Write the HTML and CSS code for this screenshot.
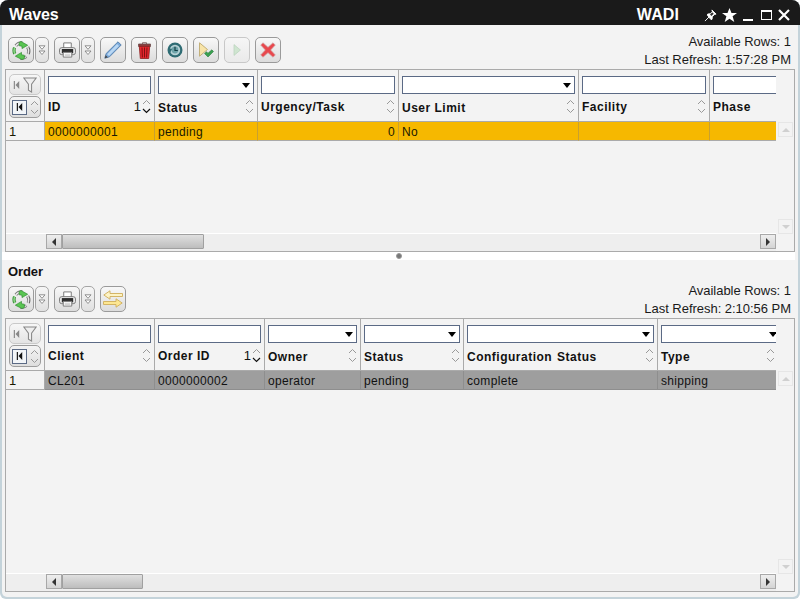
FILE: index.html
```html
<!DOCTYPE html>
<html lang="en">
<head>
<meta charset="utf-8">
<title>Waves</title>
<link rel="stylesheet" href="styles.css">
</head>
<body>
<svg class="defs" width="0" height="0" aria-hidden="true">
  <defs>
    <symbol id="i-refresh" viewBox="0 0 20 20">
      <g fill="none" stroke-linecap="butt">
        <path d="M16.500 6.500a8 8 0 0 1 .6 7" stroke="#666" stroke-width="3.400"/>
        <path d="M16.500 6.500a8 8 0 0 1 .6 7" stroke="#e6e6e6" stroke-width="1.600"/>
        <path d="M3 13.500a8 8 0 0 1-.3-6.500" stroke="#3d8f3d" stroke-width="3.400"/>
        <path d="M3 13.500a8 8 0 0 1-.3-6.500" stroke="#8ad884" stroke-width="1.600"/>
        <path d="M4 5a8 8 0 0 1 7-3" stroke="#777" stroke-width="3.200"/>
        <path d="M4 5a8 8 0 0 1 7-3" stroke="#ececec" stroke-width="1.500"/>
        <path d="M15 16.500a8 8 0 0 1-6 1.800" stroke="#666" stroke-width="3.200"/>
        <path d="M15 16.500a8 8 0 0 1-6 1.800" stroke="#e0e0e0" stroke-width="1.500"/>
      </g>
      <path d="M9.500 .5l7 4-6 3.500V5.500l-3-.5V1.500z" fill="#59c552" stroke="#2f8a2f" stroke-width=".7"/>
      <path d="M10.500 19.500l-7-3.500 6.500-4v2.500l3 .5v3.500z" fill="#59c552" stroke="#2f8a2f" stroke-width=".7"/>
    </symbol>
    <symbol id="i-more" viewBox="0 0 8 11">
      <path d="M1 .8h6L4 4.300z M1 6h6l-3 3.500z" fill="#fff" stroke="#777" stroke-width=".8"/>
    </symbol>
    <symbol id="i-print" viewBox="0 0 18 16">
      <path d="M5 .5h8v6H5z" fill="#fff" stroke="#777"/>
      <rect x=".5" y="5.500" width="17" height="7.500" rx="2.500" fill="#e8e8e8" stroke="#777"/>
      <path d="M3 7h12v4.500H3z" fill="#2c2c2c"/>
      <path d="M4.500 10.500h9v5h-9z" fill="#fff" stroke="#777"/>
      <path d="M6 12.500h6M6 14h6" stroke="#bbb" stroke-width=".8"/>
    </symbol>
    <symbol id="i-pencil" viewBox="0 0 18 18">
      <path d="M14 .8l3.200 3.200L5.500 15.800 .8 17.200 2.200 12.500z" fill="#7cabdc" stroke="#517ca8" stroke-width=".9"/>
      <path d="M13 3l2 2L5 15l-1.800-1.800z" fill="#b9d7f3"/>
      <path d="M.8 17.200l.9-3 2.100 2.100z" fill="#444"/>
    </symbol>
    <symbol id="i-trash" viewBox="0 0 13 17">
      <path d="M4.500 2V.7h4V2" fill="none" stroke="#8a7070" stroke-width="1"/>
      <path d="M.5 2h12v2.500H.5z" fill="#8c3a3a" stroke="#6a5050" stroke-width=".8"/>
      <path d="M1.300 4.500h10.400l-1 12H2.300z" fill="#e8262e" stroke="#8a2020" stroke-width=".8"/>
      <path d="M4 5.500l.4 10M6.500 5.500v10M9 5.500l-.4 10" stroke="#7d1212" stroke-width="1"/>
    </symbol>
    <symbol id="i-history" viewBox="0 0 16 16">
      <circle cx="8" cy="8" r="7.500" fill="#2f6c74"/>
      <circle cx="8" cy="8" r="5.200" fill="#b7d2d6"/>
      <circle cx="8" cy="8" r="3.400" fill="#6ea3a9"/>
      <path d="M8 4.800V8.500h2.800" fill="none" stroke="#123f46" stroke-width="1.200"/>
      <path d="M.8 6.500l4.400.2L3 11z" fill="#2f6c74"/>
    </symbol>
    <symbol id="i-run" viewBox="0 0 16 16">
      <path d="M1.500 .8L9.500 7.500 1.500 14.200z" fill="#f8e4a8" stroke="#bda96f" stroke-width=".9"/>
      <path d="M6.500 11.500l2-1.800 1.500 1.500 3.800-3.400 1.700 1.700L10 15z" fill="#3aa050" stroke="#1f7030" stroke-width=".5"/>
    </symbol>
    <symbol id="i-play" viewBox="0 0 8 12">
      <path d="M1 .6L7.400 6 1 11.400z" fill="#cfe5d0" stroke="#bcd4bf" stroke-width=".8"/>
    </symbol>
    <symbol id="i-cancel" viewBox="0 0 16 16">
      <path d="M3 .8L8 5.300 13 .8l2.300 2.300L10.700 8l4.600 4.900-2.300 2.300L8 10.700 3 15.200.7 12.900 5.300 8 .7 3.100z" fill="#e8494e" stroke="#cfa9a9" stroke-width=".7"/>
    </symbol>
    <symbol id="i-swap" viewBox="0 0 20 18">
      <path d="M.8 5L7 .8v2.700h12.500v3H7v2.700z" fill="#fdf3c4" stroke="#cfae5a" stroke-width=".9"/>
      <path d="M19.200 13L13 8.800v2.700H.5v3H13v2.700z" fill="#fde792" stroke="#cfae5a" stroke-width=".9"/>
    </symbol>
    <symbol id="i-first" viewBox="0 0 9 10">
      <path d="M1 0h1.500v10H1zM8 0v10L3.200 5z"/>
    </symbol>
    <symbol id="i-funnel" viewBox="0 0 16 18">
      <path d="M1 1h14L9.800 8v9l-3.600-2V8z" fill="#eee" stroke="#888" stroke-width="1.200"/>
    </symbol>
    <symbol id="i-pin" viewBox="0 0 14 14">
      <path d="M8.500 1l4.500 4.500-1.600.4-2.500 2.500-.2 2.600-1.200.4L3.600 6.600l.4-1.200 2.600-.2 2.400-2.500zM5.500 8.500L1 13" fill="#fff" stroke="#fff"/>
      <path d="M8.800 3.500L10.500 5.200 8 7.500 6.500 6z" fill="#333"/>
    </symbol>
    <symbol id="i-star" viewBox="0 0 15 14">
      <path d="M7.500 0l2 5h5.500l-4.400 3.300L12.300 14 7.500 10.700 2.700 14l1.700-5.700L0 5h5.500z" fill="#fff"/>
    </symbol>
    <symbol id="i-sort" viewBox="0 0 9 17">
      <path d="M1 6l3.500-3.500L8 6" fill="none" stroke="#999" stroke-width="1"/>
      <path d="M1 11l3.500 3.500L8 11" fill="none" stroke="#999" stroke-width="1"/>
    </symbol>
    <symbol id="i-sort-down" viewBox="0 0 9 17">
      <path d="M1 6l3.500-3.500L8 6" fill="none" stroke="#999" stroke-width="1"/>
      <path d="M1 11l3.500 3.500L8 11" fill="none" stroke="#111" stroke-width="1.200"/>
    </symbol>
  </defs>
</svg>

<div class="window">
  <header class="titlebar">
    <span class="title">Waves</span>
    <span class="brand">WADI</span>
    <div class="win-actions">
      <svg class="win-pin"><use href="#i-pin"/></svg>
      <svg class="win-star"><use href="#i-star"/></svg>
      <span class="win-min"></span>
      <span class="win-max"></span>
      <span class="win-close">
        <svg viewBox="0 0 12 12"><path d="M1 1l10 10M11 1L1 11" stroke="#fff" stroke-width="2.200"/></svg>
      </span>
    </div>
  </header>

  <main class="content">
    <section class="panel panel-waves">
      <div class="panel-head">
        <div class="toolbar">
          <div class="split">
            <button class="tb"><svg class="ic-refresh"><use href="#i-refresh"/></svg></button>
            <button class="tb-more"><svg class="ic-more"><use href="#i-more"/></svg></button>
          </div>
          <div class="split">
            <button class="tb"><svg class="ic-print"><use href="#i-print"/></svg></button>
            <button class="tb-more"><svg class="ic-more"><use href="#i-more"/></svg></button>
          </div>
          <button class="tb"><svg class="ic-pencil"><use href="#i-pencil"/></svg></button>
          <button class="tb"><svg class="ic-trash"><use href="#i-trash"/></svg></button>
          <button class="tb"><svg class="ic-16"><use href="#i-history"/></svg></button>
          <button class="tb"><svg class="ic-16"><use href="#i-run"/></svg></button>
          <button class="tb tb-off"><svg class="ic-play"><use href="#i-play"/></svg></button>
          <button class="tb"><svg class="ic-16"><use href="#i-cancel"/></svg></button>
        </div>
        <div class="stats">
          <div>Available Rows: 1</div>
          <div>Last Refresh: 1:57:28 PM</div>
        </div>
      </div>

      <div class="grid-box">
        <div class="grid-main">
          <div class="table cols-waves">
            <div class="hcell corner">
              <button class="corner-top">
                <svg class="ic-first-off"><use href="#i-first"/></svg>
                <svg class="ic-funnel"><use href="#i-funnel"/></svg>
              </button>
              <div class="corner-bottom">
                <span class="first-box"><svg class="ic-first"><use href="#i-first"/></svg></span>
                <svg class="sort"><use href="#i-sort"/></svg>
              </div>
            </div>
            <div class="hcell"><span class="filter"></span><div class="hrow"><span>ID</span><span class="sort-wrap"><span class="sort-n">1</span><svg class="sort"><use href="#i-sort-down"/></svg></span></div></div>
            <div class="hcell is-select"><span class="filter"><i class="caret"></i></span><div class="hrow"><span>Status</span><svg class="sort"><use href="#i-sort"/></svg></div></div>
            <div class="hcell"><span class="filter"></span><div class="hrow"><span>Urgency/Task</span><svg class="sort"><use href="#i-sort"/></svg></div></div>
            <div class="hcell is-select"><span class="filter"><i class="caret"></i></span><div class="hrow"><span>User Limit</span><svg class="sort"><use href="#i-sort"/></svg></div></div>
            <div class="hcell"><span class="filter"></span><div class="hrow"><span>Facility</span><svg class="sort"><use href="#i-sort"/></svg></div></div>
            <div class="hcell hcell-cut"><span class="filter"></span><div class="hrow"><span>Phase</span><svg class="sort"><use href="#i-sort"/></svg></div></div>

            <div class="cell row-num">1</div>
            <div class="cell row-on">0000000001</div>
            <div class="cell row-on">pending</div>
            <div class="cell row-on num">0</div>
            <div class="cell row-on">No</div>
            <div class="cell row-on"></div>
            <div class="cell row-on"></div>
          </div>
          <div class="hscroll">
            <button class="sb-btn"><i class="tri-left"></i></button>
            <span class="thumb thumb-waves"></span>
            <span class="sb-fill"></span>
            <button class="sb-btn"><i class="tri-right"></i></button>
          </div>
        </div>
        <div class="vscroll">
          <button class="vs-btn"><i class="tri-up"></i></button>
          <button class="vs-btn"><i class="tri-down"></i></button>
        </div>
      </div>
    </section>

    <div class="splitter"><span class="dot"></span></div>

    <section class="panel panel-order">
      <h2 class="panel-title">Order</h2>
      <div class="panel-head">
        <div class="toolbar">
          <div class="split">
            <button class="tb"><svg class="ic-refresh"><use href="#i-refresh"/></svg></button>
            <button class="tb-more"><svg class="ic-more"><use href="#i-more"/></svg></button>
          </div>
          <div class="split">
            <button class="tb"><svg class="ic-print"><use href="#i-print"/></svg></button>
            <button class="tb-more"><svg class="ic-more"><use href="#i-more"/></svg></button>
          </div>
          <button class="tb"><svg class="ic-swap"><use href="#i-swap"/></svg></button>
        </div>
        <div class="stats">
          <div>Available Rows: 1</div>
          <div>Last Refresh: 2:10:56 PM</div>
        </div>
      </div>

      <div class="grid-box grid-box-grow">
        <div class="grid-main">
          <div class="table cols-order">
            <div class="hcell corner">
              <button class="corner-top">
                <svg class="ic-first-off"><use href="#i-first"/></svg>
                <svg class="ic-funnel"><use href="#i-funnel"/></svg>
              </button>
              <div class="corner-bottom">
                <span class="first-box"><svg class="ic-first"><use href="#i-first"/></svg></span>
                <svg class="sort"><use href="#i-sort"/></svg>
              </div>
            </div>
            <div class="hcell"><span class="filter"></span><div class="hrow"><span>Client</span><svg class="sort"><use href="#i-sort"/></svg></div></div>
            <div class="hcell"><span class="filter"></span><div class="hrow"><span>Order ID</span><span class="sort-wrap"><span class="sort-n">1</span><svg class="sort"><use href="#i-sort-down"/></svg></span></div></div>
            <div class="hcell is-select"><span class="filter"><i class="caret"></i></span><div class="hrow"><span>Owner</span><svg class="sort"><use href="#i-sort"/></svg></div></div>
            <div class="hcell is-select"><span class="filter"><i class="caret"></i></span><div class="hrow"><span>Status</span><svg class="sort"><use href="#i-sort"/></svg></div></div>
            <div class="hcell is-select"><span class="filter"><i class="caret"></i></span><div class="hrow"><span class="wide-word">Configuration Status</span><svg class="sort"><use href="#i-sort"/></svg></div></div>
            <div class="hcell hcell-cut is-select"><span class="filter"><i class="caret"></i></span><div class="hrow"><span>Type</span><svg class="sort"><use href="#i-sort"/></svg></div></div>

            <div class="cell row-num">1</div>
            <div class="cell row-sel">CL201</div>
            <div class="cell row-sel">0000000002</div>
            <div class="cell row-sel">operator</div>
            <div class="cell row-sel">pending</div>
            <div class="cell row-sel">complete</div>
            <div class="cell row-sel">shipping</div>
          </div>
          <div class="hscroll">
            <button class="sb-btn"><i class="tri-left"></i></button>
            <span class="thumb thumb-order"></span>
            <span class="sb-fill"></span>
            <button class="sb-btn"><i class="tri-right"></i></button>
          </div>
        </div>
        <div class="vscroll">
          <button class="vs-btn"><i class="tri-up"></i></button>
          <button class="vs-btn"><i class="tri-down"></i></button>
        </div>
      </div>
    </section>
  </main>
</div>
</body>
</html>
```

FILE: styles.css
```css
* { box-sizing: border-box; }
html, body { margin: 0; padding: 0; height: 100%; background: #fff; }
body { font-family: "Liberation Sans", Arial, sans-serif; font-size: 12px; color: #111; overflow: hidden; }
.defs { position: absolute; }
button { font: inherit; padding: 0; margin: 0; }
svg { display: block; }

.window { width: 800px; height: 599px; display: flex; flex-direction: column; background: #c4d3da; border-radius: 8px 8px 6px 6px; overflow: hidden; }

.titlebar { height: 25px; flex: none; background: #1a1a1a; color: #fff; display: flex; align-items: center; padding: 5px 0 0 9px; font-weight: 700; font-size: 16px; }
.title { flex: 1; letter-spacing: -.1px; }
.brand { margin-right: 25px; letter-spacing: .1px; }
.win-actions { display: flex; align-items: center; margin-right: 10px; }
.win-pin { width: 13px; height: 13px; margin-right: 5px; }
.win-star { width: 15px; height: 14px; margin-right: 6px; }
.win-min { width: 10px; height: 2px; background: #fff; margin: 9px 8px 0 0; }
.win-max { width: 11px; height: 10px; border: 1px solid #fff; border-top-width: 2px; margin-right: 6px; }
.win-close { width: 12px; height: 12px; }
.win-close svg { width: 12px; height: 12px; }

.content { flex: 1; min-height: 0; margin: 0 2px 2px 2px; background: #f3f3f3; border-radius: 0 0 5px 5px; display: flex; flex-direction: column; }

.panel { display: flex; flex-direction: column; padding: 0 3px; }
.panel-waves { flex: none; padding-top: 8px; }
.panel-order { flex: 1; min-height: 0; padding-bottom: 4px; }

.panel-head { display: flex; justify-content: space-between; align-items: flex-start; height: 36px; }
.panel-title { margin: 0; height: 22px; padding: 4px 0 0 3px; font-size: 13px; line-height: 15px; font-weight: 700; letter-spacing: -.1px; color: #111; }

.toolbar { display: flex; gap: 5px; margin: 4px 0 0 3px; }
.split { display: flex; gap: 1px; }
.tb { width: 26px; height: 26px; border: 1px solid #9a9a9a; border-radius: 5px; background: linear-gradient(#f8f8f8, #dcdcdc); display: flex; align-items: center; justify-content: center; }
.tb-more { width: 14px; height: 26px; border: 1px solid #a5a5a5; border-radius: 5px; background: linear-gradient(#f6f6f6, #e0e0e0); display: flex; align-items: center; justify-content: center; }
.tb-off { border-color: #c8c8c8; background: linear-gradient(#f6f6f6, #eaeaea); }
.ic-refresh { width: 19px; height: 19px; }
.ic-print { width: 17px; height: 16px; }
.ic-pencil { width: 18px; height: 18px; }
.ic-trash { width: 13px; height: 17px; }
.ic-16 { width: 16px; height: 16px; }
.ic-play { width: 8px; height: 12px; }
.ic-swap { width: 20px; height: 18px; }
.ic-more { width: 8px; height: 11px; }

.stats { text-align: right; font-size: 13px; line-height: 18px; letter-spacing: -.03px; padding-right: 4px; color: #1a1a1a; }

.grid-box { display: flex; border: 1px solid #aaa; height: 183px; background: #f3f3f3; }
.grid-box-grow { height: 274px; flex: none; }
.grid-main { width: 771px; flex: none; display: flex; flex-direction: column; overflow: hidden; }

.table { display: grid; grid-template-rows: 52px 19px; flex: 1; align-content: start; width: 770px; overflow: hidden; }
.cols-waves { grid-template-columns: 39px 110px 103px 141px 180px 131px 66px; }
.cols-order { grid-template-columns: 39px 110px 110px 96px 103px 194px 118px; }

.hcell { border-right: 1px solid #aaa; border-bottom: 1px solid #aaa; padding: 6px 3px 0; display: flex; flex-direction: column; min-width: 0; }
.hcell-cut { border-right: 0; padding-right: 0; overflow: hidden; }
.filter { position: relative; display: block; height: 18px; flex: none; background: #fff; border: 1px solid #5b6a85; }
.hcell-cut .filter { width: 120px; }
.caret { position: absolute; right: 3px; top: 6px; width: 0; height: 0; border-left: 4px solid transparent; border-right: 4px solid transparent; border-top: 5px solid #000; }
.hrow { display: flex; justify-content: space-between; align-items: center; margin-top: 3px; height: 19px; font-weight: 700; font-size: 12px; letter-spacing: .5px; color: #111; white-space: nowrap; }
.hcell.is-select .hrow > span { padding-top: 2px; }
.hcell-cut .hrow { width: 114px; }
.wide-word { word-spacing: 1px; }
.sort { width: 9px; height: 17px; flex: none; }
.sort-wrap { display: flex; align-items: center; }
.sort-n { font-weight: 400; font-size: 13px; letter-spacing: 0; margin-right: 1px; }

.corner { padding: 4px 2px 0 3px; }
.corner-top { width: 32px; height: 21px; border: 1px solid #c9c9c9; border-radius: 5px; background: linear-gradient(#f7f7f7, #e4e4e4); display: flex; align-items: center; justify-content: center; gap: 3px; }
.corner-bottom { width: 32px; height: 22px; margin-top: 1px; border: 1px solid #9d9d9d; border-radius: 5px; background: linear-gradient(#f4f4f4, #dedede); display: flex; align-items: center; padding-left: 2px; gap: 3px; }
.ic-first-off { width: 7px; height: 8px; fill: #888; }
.ic-funnel { width: 14px; height: 16px; }
.first-box { width: 15px; height: 15px; border: 1px solid #5b6a85; background: #f2f5f8; display: flex; align-items: center; justify-content: center; }
.ic-first { width: 7px; height: 8px; fill: #111; }

.cell { height: 19px; border-right: 1px solid #aaa; border-bottom: 1px solid #aaa; padding: 1px 3px 0; line-height: 18px; font-size: 12px; letter-spacing: .33px; white-space: nowrap; overflow: hidden; color: #1a1a00; }
.row-num { padding-left: 3px; font-size: 13px; letter-spacing: 0; }
.row-on { background: #f6b800; border-right-color: #c8a030; }
.row-sel { background: #9e9e9e; border-right-color: #8e8e8e; border-bottom-color: #8e8e8e; color: #111; }
.num { text-align: right; }
.cell:last-child { border-right: 0; }

.hscroll { flex: none; display: flex; height: 18px; padding: 0 0 2px 40px; align-items: stretch; width: 770px; background: #eee; border-top: 1px solid #fff; }
.sb-btn { width: 16px; height: 15px; border: 1px solid #a8a8a8; background: linear-gradient(#eee, #d4d4d4); display: flex; align-items: center; justify-content: center; }
.thumb { height: 15px; border: 1px solid #a0a0a0; border-radius: 1px; background: linear-gradient(#e0e0e0, #bdbdbd); flex: none; }
.thumb-waves { width: 142px; }
.thumb-order { width: 81px; }
.sb-fill { flex: 1; }
.tri-left { width: 0; height: 0; border-top: 4px solid transparent; border-bottom: 4px solid transparent; border-right: 4px solid #333; }
.tri-right { width: 0; height: 0; border-top: 4px solid transparent; border-bottom: 4px solid transparent; border-left: 4px solid #333; }

.vscroll { flex: 1; display: flex; flex-direction: column; justify-content: space-between; align-items: center; padding: 52px 0 17px; background: #f3f3f3; }
.vs-btn { width: 15px; height: 15px; border: 1px solid #e6e6e6; background: #f3f3f3; display: flex; align-items: center; justify-content: center; }
.tri-up { width: 0; height: 0; border-left: 4px solid transparent; border-right: 4px solid transparent; border-bottom: 4px solid #d0d0d0; }
.tri-down { width: 0; height: 0; border-left: 4px solid transparent; border-right: 4px solid transparent; border-top: 4px solid #d0d0d0; }

.splitter { height: 8px; flex: none; margin-right: 3px; background: #fff; display: flex; align-items: center; justify-content: center; }
.dot { width: 6px; height: 6px; border-radius: 50%; background: #777; border: 1px solid #999; }
```
